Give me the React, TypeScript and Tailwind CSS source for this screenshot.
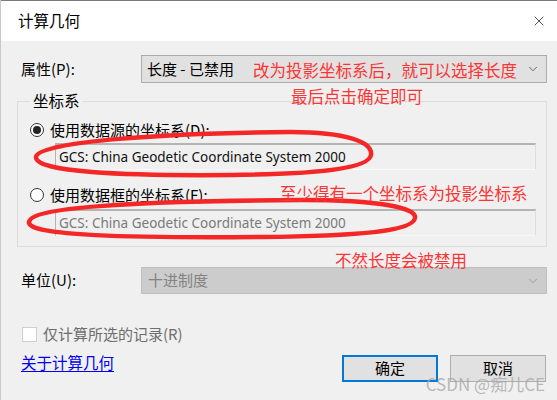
import { X, ChevronDown } from "lucide-react";

const cjk = { fontFamily: '"Noto Sans CJK SC", "Noto Sans", sans-serif' };
const latin = { fontFamily: '"Noto Sans", "Noto Sans CJK SC", sans-serif' };

function Radio({ checked }: { checked?: boolean }) {
  return (
    <span className="w-[14px] h-[14px] rounded-full border border-[#333] bg-white flex items-center justify-center shrink-0">
      {checked && <span className="w-[8px] h-[8px] rounded-full bg-[#222]" />}
    </span>
  );
}

function TextBox({ text, disabled }: { text: string; disabled?: boolean }) {
  return (
    <div
      className={`h-[27px] ml-[37px] mr-[10px] flex items-center pl-[3px] text-[13.5px] border-t-2 border-l border-t-[#b4b4b4] border-l-[#b4b4b4] border-r border-b border-r-[#dedede] border-b-[#f8f8f8] bg-[#f0f0f0] ${disabled ? "text-[#7a7a7a]" : "text-[#111]"}`}
      style={latin}
    >
      {text}
    </div>
  );
}

export default function App() {
  return (
    <div className="relative w-[557px] h-[400px] overflow-hidden bg-[#f0f0f0] text-[15px] text-black border-l border-[#c8c8c8]" style={cjk}>
      {/* Title bar */}
      <header className="h-[41px] bg-white border-t border-[#7a7a7a] flex items-center justify-between pl-[17px] pr-[10px]">
        <span className="text-[15.5px] leading-none">计算几何</span>
        <X size={16} strokeWidth={1.2} className="text-[#222]" />
      </header>

      <div className="pl-[16px] pr-[10px]">
        {/* 属性 */}
        <div className="mt-[14px] flex items-center">
          <span className="w-[124px] pl-[4px]">属性(P):</span>
          <div className="flex-1 h-[28px] bg-[#e1e1e1] border border-[#adadad] flex items-center justify-between pl-[5px] pr-[6px]">
            <span>长度 - 已禁用</span>
            <ChevronDown size={14} strokeWidth={1.5} className="text-[#555]" />
          </div>
        </div>

        {/* 坐标系 group */}
        <div className="relative mt-[18px] border border-[#dcdcdc] pt-[18px] pb-[10px]">
          <span className="absolute top-[-12px] left-[12px] px-[3px] bg-[#f0f0f0] leading-[20px] text-[15.5px]">坐标系</span>
          <div className="flex items-center gap-[6px] pl-[12px] h-[20px]">
            <Radio checked />
            <span>使用数据源的坐标系(D):</span>
          </div>
          <div className="mt-[3px]">
            <TextBox text="GCS: China Geodetic Coordinate System 2000" />
          </div>
          <div className="mt-[15px] flex items-center gap-[6px] pl-[12px] h-[20px]">
            <Radio />
            <span>使用数据框的坐标系(F):</span>
          </div>
          <div className="mt-[4px]">
            <TextBox text="GCS: China Geodetic Coordinate System 2000" disabled />
          </div>
        </div>

        {/* 单位 */}
        <div className="mt-[20px] flex items-center">
          <span className="w-[124px] pl-[4px]">单位(U):</span>
          <div className="flex-1 h-[27px] bg-[#cccccc] border border-[#bfbfbf] flex items-center justify-between pl-[6px] pr-[6px] text-[#838383]">
            <span>十进制度</span>
            <ChevronDown size={14} strokeWidth={1.5} className="text-[#999]" />
          </div>
        </div>

        {/* checkbox */}
        <div className="mt-[30px] h-[20px] flex items-center gap-[6px] pl-[5px] text-[#6d6d6d]">
          <span className="w-[15px] h-[15px] bg-white border border-[#cfcfcf]" />
          <span>仅计算所选的记录(R)</span>
        </div>

        {/* footer row */}
        <div className="mt-[8px] flex items-start justify-between pl-[4px]">
          <a className="leading-[20px] text-[#0000ee] underline underline-offset-2 text-[15.5px]">关于计算几何</a>
          <div className="pt-[3px] flex gap-[12px] mr-[1px]">
            <button className="w-[96px] h-[27px] bg-[#e1e1e1] border-2 border-[#0078d7] flex items-center justify-center">确定</button>
            <button className="w-[96px] h-[27px] bg-[#e1e1e1] border border-[#adadad] flex items-center justify-center">取消</button>
          </div>
        </div>
      </div>

      {/* Annotations */}
      <svg className="absolute inset-0 pointer-events-none" width="557" height="400" viewBox="0 0 557 400">
        <path
          d="M 35 157 C 36 141, 170 133, 290 132 C 345 132, 372 142, 370 155 C 368 168, 320 174, 230 175 C 120 176, 34 172, 35 157 Z"
          fill="none"
          stroke="#f42626"
          strokeWidth="4.5"
        />
        <path
          d="M 28 222 C 30 206, 150 201, 300 200 C 380 200, 416 208, 414 218 C 412 230, 370 236, 260 237 C 130 238, 26 236, 28 222 Z"
          fill="none"
          stroke="#f42626"
          strokeWidth="4.5"
        />
      </svg>
      <span className="absolute left-[252px] top-[59px] text-[16.5px] leading-[22px] text-[#fb3535]">改为投影坐标系后，就可以选择长度</span>
      <span className="absolute left-[290px] top-[85px] text-[16.5px] leading-[22px] text-[#fb3535]">最后点击确定即可</span>
      <span className="absolute left-[279px] top-[182px] text-[16.5px] leading-[22px] text-[#fb3535]">至少得有一个坐标系为投影坐标系</span>
      <span className="absolute left-[334px] top-[249px] text-[16.5px] leading-[22px] text-[#fb3535]">不然长度会被禁用</span>
      <span className="absolute right-[12px] top-[373px] text-[17px] leading-[22px] text-[#a8a8a8]/80">CSDN @痴儿CE</span>
    </div>
  );
}
